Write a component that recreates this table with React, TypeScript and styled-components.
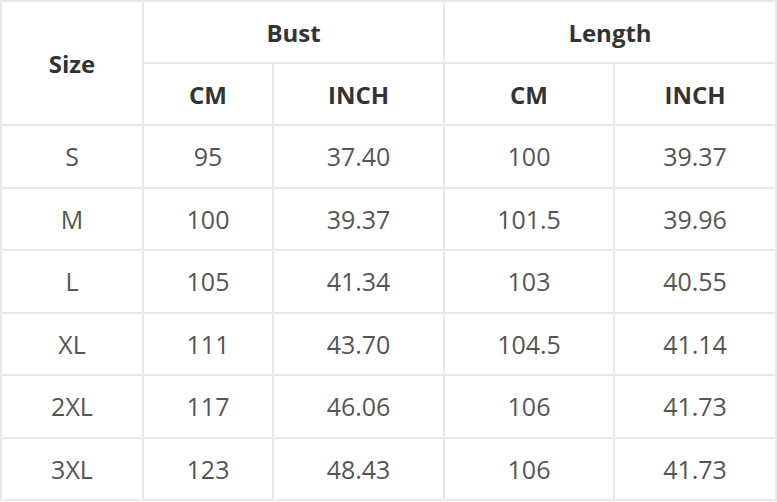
import React from "react";
import styled, { createGlobalStyle } from "styled-components";

const Global = createGlobalStyle`
  html, body { margin: 0; padding: 0; background: #fff; }
  body { font-family: "Open Sans", "Liberation Sans", sans-serif; }
`;

const Table = styled.table`
  border-collapse: collapse;
  table-layout: fixed;
  width: 775px;
  font-family: "Open Sans", "Liberation Sans", sans-serif;
  font-size: 25px;
  color: #555;
`;

const Col = styled.col<{ $w: number }>`
  width: ${(p) => p.$w}px;
`;

const HeadCell = styled.th`
  border: 2px solid #e8e8e8;
  height: 60px;
  padding: 0;
  font-weight: 700;
  color: #333;
  text-align: center;
  vertical-align: middle;
  font-size: 24px;
`;

const Row = styled.tr`
  height: 62.5px;
`;

const Cell = styled.td`
  border: 2px solid #e8e8e8;
  padding: 0;
  text-align: center;
  vertical-align: middle;
  font-weight: 400;
`;

const rows = [
  ["S", "95", "37.40", "100", "39.37"],
  ["M", "100", "39.37", "101.5", "39.96"],
  ["L", "105", "41.34", "103", "40.55"],
  ["XL", "111", "43.70", "104.5", "41.14"],
  ["2XL", "117", "46.06", "106", "41.73"],
  ["3XL", "123", "48.43", "106", "41.73"],
];

export default function App() {
  return (
    <>
      <Global />
      <Table>
        <colgroup>
          <Col $w={142} />
          <Col $w={130} />
          <Col $w={171} />
          <Col $w={170} />
          <Col $w={162} />
        </colgroup>
        <thead>
          <tr>
            <HeadCell rowSpan={2}>Size</HeadCell>
            <HeadCell colSpan={2}>Bust</HeadCell>
            <HeadCell colSpan={2}>Length</HeadCell>
          </tr>
          <tr>
            <HeadCell>CM</HeadCell>
            <HeadCell>INCH</HeadCell>
            <HeadCell>CM</HeadCell>
            <HeadCell>INCH</HeadCell>
          </tr>
        </thead>
        <tbody>
          {rows.map((r) => (
            <Row key={r[0]}>
              {r.map((v, i) => (
                <Cell key={i}>{v}</Cell>
              ))}
            </Row>
          ))}
        </tbody>
      </Table>
    </>
  );
}
